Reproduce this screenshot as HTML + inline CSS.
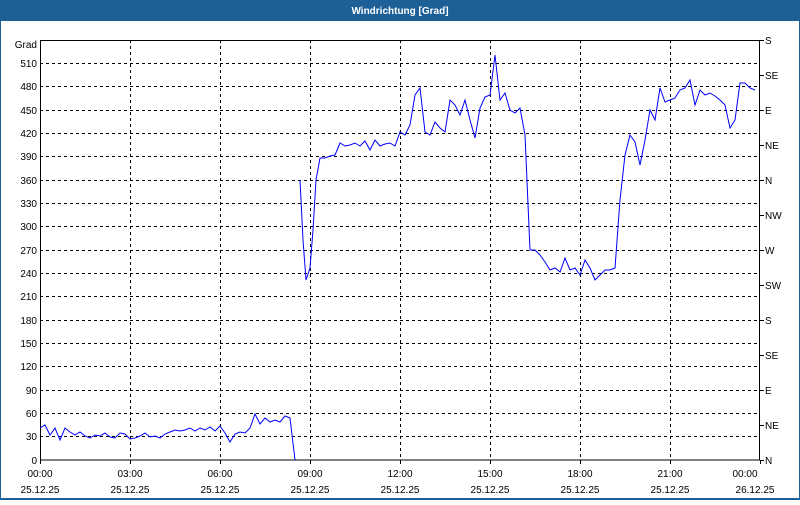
<!DOCTYPE html>
<html><head><meta charset="utf-8"><style>
body{margin:0;width:800px;height:500px;overflow:hidden;background:#fff;font-family:"Liberation Sans",sans-serif}
</style></head><body>
<svg width="800" height="500" xmlns="http://www.w3.org/2000/svg" font-family="Liberation Sans, sans-serif" font-size="10">
<rect x="0" y="0" width="800" height="500" fill="#1d5f97"/>
<rect x="1" y="21" width="798" height="477" fill="#fff"/>
<text x="400" y="14" fill="#fff" font-weight="bold" font-size="10" text-anchor="middle">Windrichtung [Grad]</text>
<text x="37" y="48" text-anchor="end">Grad</text>
<g stroke="#000" stroke-dasharray="3,3" stroke-width="1">
<line x1="40" x2="760" y1="63.5" y2="63.5"/><line x1="40" x2="760" y1="86.5" y2="86.5"/><line x1="40" x2="760" y1="110.5" y2="110.5"/><line x1="40" x2="760" y1="133.5" y2="133.5"/><line x1="40" x2="760" y1="156.5" y2="156.5"/><line x1="40" x2="760" y1="180.5" y2="180.5"/><line x1="40" x2="760" y1="203.5" y2="203.5"/><line x1="40" x2="760" y1="226.5" y2="226.5"/><line x1="40" x2="760" y1="250.5" y2="250.5"/><line x1="40" x2="760" y1="273.5" y2="273.5"/><line x1="40" x2="760" y1="296.5" y2="296.5"/><line x1="40" x2="760" y1="320.5" y2="320.5"/><line x1="40" x2="760" y1="343.5" y2="343.5"/><line x1="40" x2="760" y1="366.5" y2="366.5"/><line x1="40" x2="760" y1="390.5" y2="390.5"/><line x1="40" x2="760" y1="413.5" y2="413.5"/><line x1="40" x2="760" y1="436.5" y2="436.5"/>
<line y1="40" y2="460" x1="130.5" x2="130.5"/><line y1="40" y2="460" x1="220.5" x2="220.5"/><line y1="40" y2="460" x1="310.5" x2="310.5"/><line y1="40" y2="460" x1="400.5" x2="400.5"/><line y1="40" y2="460" x1="490.5" x2="490.5"/><line y1="40" y2="460" x1="580.5" x2="580.5"/><line y1="40" y2="460" x1="670.5" x2="670.5"/>
</g>
<rect x="40.5" y="40.5" width="719" height="419.5" fill="none" stroke="#000"/>
<g stroke="#000">
<line x1="760" x2="764" y1="40.5" y2="40.5"/><line x1="760" x2="764" y1="75.5" y2="75.5"/><line x1="760" x2="764" y1="110.5" y2="110.5"/><line x1="760" x2="764" y1="145.5" y2="145.5"/><line x1="760" x2="764" y1="180.5" y2="180.5"/><line x1="760" x2="764" y1="215.5" y2="215.5"/><line x1="760" x2="764" y1="250.5" y2="250.5"/><line x1="760" x2="764" y1="285.5" y2="285.5"/><line x1="760" x2="764" y1="320.5" y2="320.5"/><line x1="760" x2="764" y1="355.5" y2="355.5"/><line x1="760" x2="764" y1="390.5" y2="390.5"/><line x1="760" x2="764" y1="425.5" y2="425.5"/><line x1="760" x2="764" y1="460.5" y2="460.5"/>
<line x1="40.5" x2="40.5" y1="460" y2="464"/><line x1="130.5" x2="130.5" y1="460" y2="464"/><line x1="220.5" x2="220.5" y1="460" y2="464"/><line x1="310.5" x2="310.5" y1="460" y2="464"/><line x1="400.5" x2="400.5" y1="460" y2="464"/><line x1="490.5" x2="490.5" y1="460" y2="464"/><line x1="580.5" x2="580.5" y1="460" y2="464"/><line x1="670.5" x2="670.5" y1="460" y2="464"/><line x1="760.5" x2="760.5" y1="460" y2="464"/>
</g>
<g text-anchor="end">
<text x="37" y="67">510</text><text x="37" y="90">480</text><text x="37" y="114">450</text><text x="37" y="137">420</text><text x="37" y="160">390</text><text x="37" y="184">360</text><text x="37" y="207">330</text><text x="37" y="230">300</text><text x="37" y="254">270</text><text x="37" y="277">240</text><text x="37" y="300">210</text><text x="37" y="324">180</text><text x="37" y="347">150</text><text x="37" y="370">120</text><text x="37" y="394">90</text><text x="37" y="417">60</text><text x="37" y="440">30</text><text x="37" y="464">0</text>
</g>
<g>
<text x="765" y="44">S</text><text x="765" y="79">SE</text><text x="765" y="114">E</text><text x="765" y="149">NE</text><text x="765" y="184">N</text><text x="765" y="219">NW</text><text x="765" y="254">W</text><text x="765" y="289">SW</text><text x="765" y="324">S</text><text x="765" y="359">SE</text><text x="765" y="394">E</text><text x="765" y="429">NE</text><text x="765" y="464">N</text>
</g>
<g text-anchor="middle">
<text x="40" y="477">00:00</text><text x="130" y="477">03:00</text><text x="220" y="477">06:00</text><text x="310" y="477">09:00</text><text x="400" y="477">12:00</text><text x="490" y="477">15:00</text><text x="580" y="477">18:00</text><text x="670" y="477">21:00</text><text x="745" y="477">00:00</text>
<text x="40" y="493">25.12.25</text><text x="130" y="493">25.12.25</text><text x="220" y="493">25.12.25</text><text x="310" y="493">25.12.25</text><text x="400" y="493">25.12.25</text><text x="490" y="493">25.12.25</text><text x="580" y="493">25.12.25</text><text x="670" y="493">25.12.25</text><text x="755" y="493">26.12.25</text>
</g>
<g fill="none" stroke="#0000ff" stroke-width="1">
<polyline points="40,428 45,425 50,435 55,428 60,440 65,428 70,432 75,435 80,432 85,436 90,438 95,435 100,436 105,433 110,437 115,438 120,433 125,434 130,439 135,438 140,436 145,433 150,437 155,436 160,438 165,434 170,432 175,430 180,431 185,430 190,428 195,431 200,428 205,430 210,427 215,431 220,426 225,433 230,442 235,434 240,432 245,433 250,428 255,414 260,424 265,418 270,422 275,420 280,422 285,416 290,418 295,460"/>
<polyline points="300,180 303,240 306,280 310,268 313,230 316,180 320,158 325,158 330,156 335,155 340,143 345,146 350,145 355,143 360,146 365,141 370,150 375,140 380,146 385,144 390,143 395,146 400,132 405,135 410,125 415,95 420,88 425,132 430,135 435,122 440,128 445,132 450,100 455,105 460,115 465,100 470,120 475,138 480,108 485,97 490,95 495,55 500,100 505,93 510,110 515,113 520,108 525,135 530,250 535,250 540,255 545,262 550,270 555,268 560,272 565,258 570,270 575,268 580,275 585,260 590,268 595,280 600,275 605,270 610,270 615,268 620,200 625,155 630,135 635,142 640,165 645,140 650,110 655,120 660,88 665,102 670,100 675,98 680,90 685,88 690,80 695,105 700,90 705,95 710,93 715,96 720,100 725,105 730,128 735,120 740,83 745,83 750,88 755,90"/>
</g>
</svg>
</body></html>
